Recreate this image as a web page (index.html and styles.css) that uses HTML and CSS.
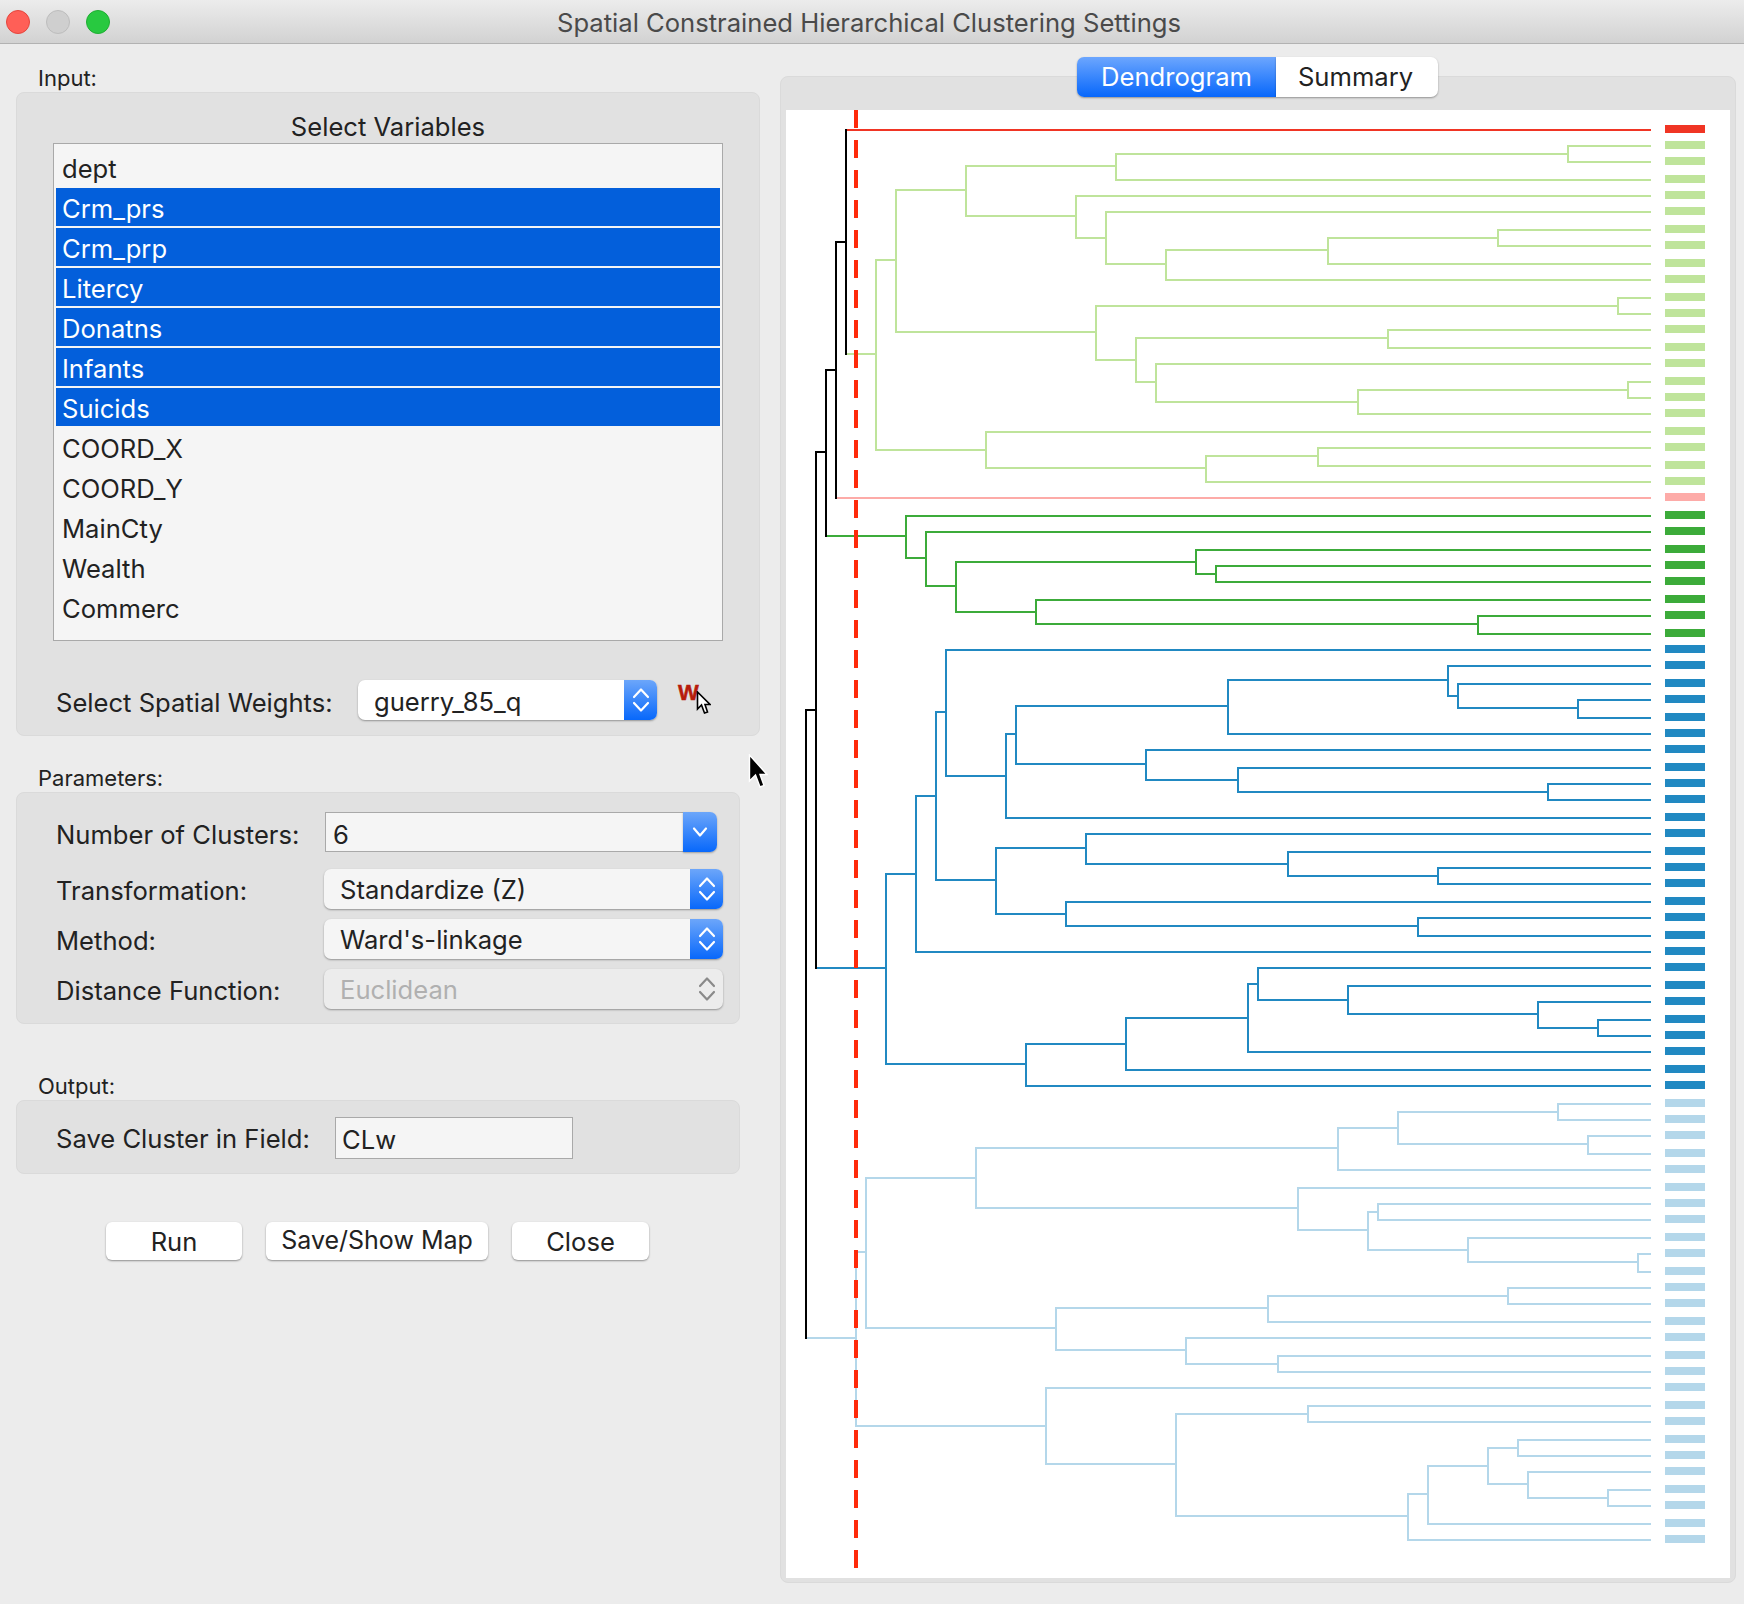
FILE: index.html
```html
<!DOCTYPE html>
<html lang="en">
<head>
<meta charset="utf-8">
<title>Spatial Constrained Hierarchical Clustering Settings</title>
<link rel="stylesheet" href="styles.css">
</head>
<body>
<div class="window">
  <header class="titlebar">
    <div class="lights">
      <span class="light light-close"></span>
      <span class="light light-min"></span>
      <span class="light light-max"></span>
    </div>
    <div class="title">Spatial Constrained Hierarchical Clustering Settings</div>
  </header>
  <main class="content">
    <section class="left">
      <div class="group-label label-input">Input:</div>
      <div class="panel panel-input">
        <div class="list-title">Select Variables</div>
        <div class="list">
          <div class="item">dept</div>
          <div class="item selected">Crm_prs</div>
          <div class="item selected">Crm_prp</div>
          <div class="item selected">Litercy</div>
          <div class="item selected">Donatns</div>
          <div class="item selected">Infants</div>
          <div class="item selected">Suicids</div>
          <div class="item">COORD_X</div>
          <div class="item">COORD_Y</div>
          <div class="item">MainCty</div>
          <div class="item">Wealth</div>
          <div class="item">Commerc</div>
        </div>
        <div class="row row-weights">
          <div class="row-label label-weights">Select Spatial Weights:</div>
          <div class="select select-weights">
            <span class="select-text">guerry_85_q</span>
            <span class="stepper"><svg width="18" height="30" viewBox="0 0 18 30"><path class="chev" d="M2 12L9 4.5L16 12M2 18L9 25.5L16 18"/></svg></span>
          </div>
          <div class="w-tool">
            <span class="w-glyph">W</span>
            <svg class="w-cursor" width="15" height="24" viewBox="0 0 15 24"><path d="M1.5 1V18L5.5 14L8.5 22L11.5 21L9 13.5H14Z" fill="#fff" stroke="#000" stroke-width="1.6"/></svg>
          </div>
        </div>
      </div>

      <div class="group-label label-params">Parameters:</div>
      <div class="panel panel-params">
        <div class="row row-clusters">
          <div class="row-label label-clusters">Number of Clusters:</div>
          <div class="combo">
            <span class="combo-text">6</span>
            <span class="stepper combo-btn"><svg width="16" height="14" viewBox="0 0 16 14"><path class="chev" d="M2 3.5L8 10.5L14 3.5"/></svg></span>
          </div>
        </div>
        <div class="row row-param">
          <div class="row-label label-param">Transformation:</div>
          <div class="select select-param">
            <span class="select-text">Standardize (Z)</span>
            <span class="stepper"><svg width="18" height="30" viewBox="0 0 18 30"><path class="chev" d="M2 12L9 4.5L16 12M2 18L9 25.5L16 18"/></svg></span>
          </div>
        </div>
        <div class="row row-param">
          <div class="row-label label-param">Method:</div>
          <div class="select select-param">
            <span class="select-text">Ward's-linkage</span>
            <span class="stepper"><svg width="18" height="30" viewBox="0 0 18 30"><path class="chev" d="M2 12L9 4.5L16 12M2 18L9 25.5L16 18"/></svg></span>
          </div>
        </div>
        <div class="row row-param">
          <div class="row-label label-param">Distance Function:</div>
          <div class="select select-param select-disabled">
            <span class="select-text">Euclidean</span>
            <span class="stepper stepper-disabled"><svg width="18" height="30" viewBox="0 0 18 30"><path class="chev chev-disabled" d="M2 12L9 4.5L16 12M2 18L9 25.5L16 18"/></svg></span>
          </div>
        </div>
      </div>

      <div class="group-label label-output">Output:</div>
      <div class="panel panel-output">
        <div class="row">
          <div class="row-label label-field">Save Cluster in Field:</div>
          <div class="field">CLw</div>
        </div>
      </div>

      <div class="buttons">
        <div class="button button-run">Run</div>
        <div class="button button-save">Save/Show Map</div>
        <div class="button button-close">Close</div>
      </div>
    </section>

    <section class="right">
      <div class="tabs">
        <div class="tab tab-active">Dendrogram</div>
        <div class="tab tab-summary">Summary</div>
      </div>
      <div class="panel-chart">
        <svg class="dendrogram" width="944" height="1468" viewBox="786 110 944 1468">
          <path class="link c-lightblue" d="M806 1338H856M866 1252H856V1426H1046M976 1178H866V1328H1056M1338 1148H976V1208H1298M1398 1128H1338V1170H1650M1558 1112H1398V1144H1588M1650 1104H1558V1120H1650M1650 1136H1588V1154H1650M1650 1188H1298V1230H1368M1378 1212H1368V1250H1468M1650 1204H1378V1220H1650M1650 1238H1468V1262H1638M1650 1254H1638V1272H1650M1268 1308H1056V1350H1186M1508 1296H1268V1322H1650M1650 1288H1508V1304H1650M1650 1338H1186V1364H1278M1650 1356H1278V1372H1650M1650 1388H1046V1464H1176M1308 1414H1176V1516H1408M1650 1406H1308V1422H1650M1428 1494H1408V1540H1650M1488 1466H1428V1524H1650M1518 1448H1488V1484H1528M1650 1440H1518V1456H1650M1650 1472H1528V1498H1608M1650 1490H1608V1506H1650"/>
          <path class="link c-blue" d="M816 968H886M916 874H886V1064H1026M936 796H916V952H1650M946 712H936V880H996M1650 650H946V776H1006M1016 734H1006V818H1650M1228 706H1016V764H1146M1448 680H1228V734H1650M1650 666H1448V696H1458M1650 684H1458V708H1578M1650 700H1578V718H1650M1650 750H1146V780H1238M1650 768H1238V792H1548M1650 784H1548V800H1650M1086 848H996V914H1066M1650 834H1086V864H1288M1650 852H1288V876H1438M1650 868H1438V884H1650M1650 902H1066V926H1418M1650 918H1418V936H1650M1126 1044H1026V1086H1650M1248 1018H1126V1070H1650M1258 984H1248V1052H1650M1650 968H1258V1000H1348M1650 986H1348V1014H1538M1650 1002H1538V1028H1598M1650 1020H1598V1036H1650"/>
          <path class="link c-green" d="M826 536H906M1650 516H906V558H926M1650 532H926V586H956M1196 562H956V612H1036M1650 550H1196V574H1216M1650 566H1216V582H1650M1650 600H1036V624H1478M1650 616H1478V634H1650"/>
          <path class="link c-lightgreen" d="M846 354H876M896 260H876V450H986M966 190H896V332H1096M1116 166H966V216H1076M1568 154H1116V180H1650M1650 146H1568V162H1650M1650 196H1076V238H1106M1650 212H1106V264H1166M1328 250H1166V280H1650M1498 238H1328V264H1650M1650 230H1498V246H1650M1618 306H1096V360H1136M1650 298H1618V314H1650M1388 338H1136V382H1156M1650 330H1388V348H1650M1650 364H1156V402H1358M1628 390H1358V414H1650M1650 382H1628V398H1650M1650 432H986V468H1206M1318 456H1206V482H1650M1650 448H1318V466H1650"/>
          <path class="link c-pink" d="M836 498H1650"/>
          <path class="link c-red" d="M846 130H1650"/>
          <path class="link c-black" d="M846 130V354M846 242H836V498M836 370H826V536M826 452H816V968M816 710H806V1338"/>
          <path class="cut" d="M856 110V1568"/>
          <path class="swatch c-red" d="M1665 129h40"/>
          <path class="swatch c-lightgreen" d="M1665 145h40M1665 161h40M1665 179h40M1665 195h40M1665 211h40M1665 229h40M1665 245h40M1665 263h40M1665 279h40M1665 297h40M1665 313h40M1665 329h40M1665 347h40M1665 363h40M1665 381h40M1665 397h40M1665 413h40M1665 431h40M1665 447h40M1665 465h40M1665 481h40"/>
          <path class="swatch c-pink" d="M1665 497h40"/>
          <path class="swatch c-green" d="M1665 515h40M1665 531h40M1665 549h40M1665 565h40M1665 581h40M1665 599h40M1665 615h40M1665 633h40"/>
          <path class="swatch c-blue" d="M1665 649h40M1665 665h40M1665 683h40M1665 699h40M1665 717h40M1665 733h40M1665 749h40M1665 767h40M1665 783h40M1665 799h40M1665 817h40M1665 833h40M1665 851h40M1665 867h40M1665 883h40M1665 901h40M1665 917h40M1665 935h40M1665 951h40M1665 967h40M1665 985h40M1665 1001h40M1665 1019h40M1665 1035h40M1665 1051h40M1665 1069h40M1665 1085h40"/>
          <path class="swatch c-lightblue" d="M1665 1103h40M1665 1119h40M1665 1135h40M1665 1153h40M1665 1169h40M1665 1187h40M1665 1203h40M1665 1219h40M1665 1237h40M1665 1253h40M1665 1271h40M1665 1287h40M1665 1303h40M1665 1321h40M1665 1337h40M1665 1355h40M1665 1371h40M1665 1387h40M1665 1405h40M1665 1421h40M1665 1439h40M1665 1455h40M1665 1471h40M1665 1489h40M1665 1505h40M1665 1523h40M1665 1539h40"/>
        </svg>
      </div>
    </section>
  </main>
  <svg class="pointer" width="20" height="36" viewBox="0 0 20 36"><path d="M1.5 1V27L7.5 21L12 33L16 31.5L12 20.5H19Z" fill="#000" stroke="#fff" stroke-width="1.4"/></svg>
</div>
</body>
</html>
```
FILE: styles.css
```css
* { box-sizing: border-box; }
html, body { margin: 0; padding: 0; }
body {
  width: 1744px;
  height: 1604px;
  overflow: hidden;
  background: #ececec;
  font-family: Inter, "Liberation Sans", sans-serif;
  font-size: 25.6px;
  color: #222;
}
.window { position: relative; width: 1744px; height: 1604px; }

.titlebar {
  display: flex;
  align-items: center;
  height: 44px;
  padding-left: 6px;
  background: linear-gradient(#ececec, #d2d2d2);
  border-bottom: 1px solid #b2b2b2;
  position: relative;
}
.lights { display: flex; gap: 16px; }
.light { width: 24px; height: 24px; border-radius: 50%; border: 1px solid; }
.light-close { background: #ff5f57; border-color: #e5453c; }
.light-min { background: #cfcfcf; border-color: #bdbdbd; }
.light-max { background: #28c940; border-color: #1fae32; }
.title {
  flex: 1;
  text-align: center;
  padding-top: 2px;
  padding-right: 116px;
  font-size: 25.6px;
  color: #4a4a4a;
}

.content { display: flex; }
.left { width: 780px; padding-left: 16px; }

.group-label {
  height: 24px;
  line-height: 20px;
  padding-left: 22px;
  font-size: 22px;
}
.label-input { margin-top: 24px; }
.label-params { margin-top: 32px; }
.label-output { margin-top: 52px; }

.panel {
  background: #e1e1e1;
  border: 1px solid #dadada;
  border-radius: 8px;
}
.panel-input { width: 744px; height: 644px; padding-top: 19px; }
.panel-params { width: 724px; height: 232px; padding-top: 19px; }
.panel-output { width: 724px; height: 74px; padding-top: 16px; }

.list-title { height: 31px; line-height: 29px; text-align: center; }
.list {
  margin-left: 36px;
  width: 670px;
  height: 498px;
  padding: 4px 2px;
  background: #f5f5f5;
  border: 1px solid #a9a9a9;
}
.item { height: 40px; line-height: 41px; padding-left: 6px; }
.selected {
  height: 38px;
  line-height: 42px;
  margin-bottom: 2px;
  background: #035fdb;
  color: #fff;
}

.row { display: flex; align-items: center; padding-left: 39px; }
.row-label { padding-top: 2px; }
.row-weights { margin-top: 39px; }
.label-weights { width: 302px; padding-top: 4px; }
.label-clusters { width: 269px; padding-top: 4px; }
.label-param { width: 268px; }
.label-field { width: 279px; padding-top: 1px; }
.row-param { margin-top: 10px; }
.row-clusters + .row-param { margin-top: 17px; }

.select {
  display: flex;
  height: 40px;
  background: #f5f5f5;
  border-radius: 7px;
  box-shadow: 0 1px 2px rgba(0,0,0,.35);
  overflow: hidden;
}
.select-text { flex: 1; line-height: 42px; padding-left: 16px; }
.select-weights { width: 299px; background: #fff; }
.select-weights .select-text { line-height: 44px; }
.select-param { width: 399px; }
.select-disabled { background: #ececec; color: #b0b0b0; }

.stepper {
  display: flex;
  align-items: center;
  justify-content: center;
  width: 33px;
  background: linear-gradient(#6ca6fa, #0868fb);
}
.stepper-disabled { background: none; }
.chev { fill: none; stroke: #fff; stroke-width: 2.2; stroke-linecap: round; stroke-linejoin: round; }
.chev-disabled { stroke: #8a8a8a; }

.w-tool { position: relative; margin-left: 21px; width: 34px; height: 40px; }
.w-glyph {
  display: block;
  font-family: "Liberation Sans", sans-serif;
  font-weight: 700;
  font-size: 22px;
  line-height: 22px;
  color: #b71c0c;
  -webkit-text-stroke: 0.5px #b71c0c;
  padding-top: 2px;
}
.w-cursor { position: absolute; left: 18px; top: 11px; }

.combo { display: flex; width: 392px; height: 40px; }
.combo-text {
  flex: 1;
  line-height: 44px;
  padding-left: 7px;
  background: #f5f5f5;
  border: 1px solid #a9a9a9;
  border-right: 0;
}
.combo-btn { width: 34px; border-radius: 0 7px 7px 0; box-shadow: 0 1px 2px rgba(0,0,0,.3); }

.field {
  width: 238px;
  height: 42px;
  line-height: 44px;
  padding-left: 6px;
  background: #f5f5f5;
  border: 1px solid #a9a9a9;
}

.buttons { display: flex; gap: 24px; margin-top: 48px; padding-left: 90px; }
.button {
  height: 38px;
  line-height: 40px;
  text-align: center;
  background: #fff;
  border-radius: 6px;
  box-shadow: 0 1px 2px rgba(0,0,0,.4);
}
.button-run { width: 136px; }
.button-save { width: 222px; line-height: 36px; font-size: 25px; }
.button-close { width: 137px; }

.right { width: 956px; }
.tabs {
  position: relative;
  z-index: 1;
  display: flex;
  justify-content: center;
  height: 40px;
  margin-top: 13px;
  margin-bottom: -21px;
  padding-right: 1px;
}
.tab {
  width: 162px;
  line-height: 40px;
  text-align: center;
  background: #fff;
  border-radius: 0 7px 7px 0;
  box-shadow: 0 1px 2px rgba(0,0,0,.35);
}
.tab-active {
  width: 199px;
  border-radius: 7px 0 0 7px;
  background: linear-gradient(#6ca6fe, #0767fb);
  color: #fff;
}
.tab-summary { padding-right: 3px; }
.panel-chart {
  width: 956px;
  height: 1507px;
  padding: 33px 5px 4px;
  background: #e1e1e1;
  border: 1px solid #dadada;
  border-radius: 8px;
}
.dendrogram { display: block; background: #fff; }

.link { fill: none; stroke-width: 2; stroke-linecap: square; }
.swatch { fill: none; stroke-width: 8; }
.link.c-red, .swatch.c-red { stroke: #f03524; }
.link.c-lightgreen, .swatch.c-lightgreen { stroke: #bfe49b; }
.link.c-pink, .swatch.c-pink { stroke: #fdaba8; }
.link.c-green, .swatch.c-green { stroke: #3cab3a; }
.link.c-blue, .swatch.c-blue { stroke: #2189c2; }
.link.c-lightblue, .swatch.c-lightblue { stroke: #b4d7ea; }
.link.c-black { stroke: #000; }
.cut { fill: none; stroke: #ff2a0a; stroke-width: 4; stroke-dasharray: 18 12; }

.pointer { position: absolute; left: 748px; top: 754px; }
```
